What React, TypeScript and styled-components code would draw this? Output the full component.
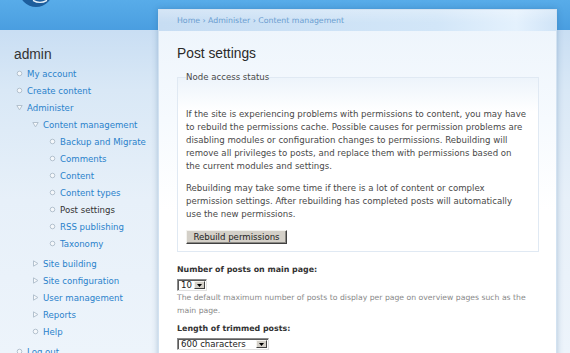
import React from 'react';
import styled, { createGlobalStyle } from 'styled-components';

const Global = createGlobalStyle`
  html, body { margin: 0; padding: 0; overflow: hidden; }
  body { font-family: "DejaVu Sans", Verdana, sans-serif; }
`;

const Page = styled.div`
  width: 570px;
  height: 353px;
  overflow: hidden;
  display: flex;
  align-items: flex-start;
  background: linear-gradient(
    to bottom,
    #58ace9 0px,
    #4a9ee0 30px,
    #c9def3 30px,
    #d9e8f6 90px,
    #e7f0f9 200px,
    #edf4fb 353px
  );
`;

const Sidebar = styled.aside`
  width: 158px;
  flex-shrink: 0;
  padding-left: 14px;
  box-sizing: border-box;
`;

const LogoSvg = styled.svg`
  display: block;
  margin-left: 5px;
`;

const BlockTitle = styled.h2`
  margin: 39px 0 0;
  font: normal 13.8px/18px "Liberation Sans", Arial, sans-serif;
  color: #333;
`;

const MenuList = styled.ul<{ $indent: number; $nested?: boolean }>`
  list-style: none;
  margin: ${p => (p.$nested ? '0' : '2px 0 0')};
  padding: 0 0 ${p => (p.$nested ? '3px' : '0')} ${p => p.$indent}px;
`;

const MenuItem = styled.li`
  margin: 0;
  padding: 0;
`;

const Row = styled.div`
  display: flex;
  align-items: flex-start;
  height: 17px;
  font-size: 8.6px;
  line-height: 17px;
  white-space: nowrap;
`;

const BulletSvg = styled.svg`
  flex-shrink: 0;
  margin: 4px 4px 0 0;
`;

const MenuLink = styled.a<{ $active?: boolean }>`
  color: ${p => (p.$active ? '#333' : '#2a82cb')};
  text-decoration: none;
`;

const Panel = styled.main`
  width: 399px;
  flex-shrink: 0;
  margin-top: 9px;
  height: 360px;
  box-sizing: border-box;
  border: 1px solid #d2e2f1;
  border-bottom: none;
  box-shadow: 0 0 6px rgba(30, 80, 130, 0.3);
  background: linear-gradient(to bottom, #eef5fc 20px, #f6fafe 110px, #ffffff 200px);
  display: flex;
  flex-direction: column;
`;

const Breadcrumb = styled.nav`
  height: 21px;
  flex-shrink: 0;
  padding-left: 18px;
  font-size: 7.8px;
  line-height: 21px;
  color: #6a9dd0;
  background:
    linear-gradient(to bottom, rgba(255, 255, 255, 0.25), rgba(255, 255, 255, 0) 60%),
    linear-gradient(to right, #c7ddf3 0%, #d2e6f8 70%, #e4f1fd 90%, #d0e4f7 100%);
`;

const Crumb = styled.a`
  color: #6a9dd0;
  text-decoration: none;
`;

const Content = styled.div`
  padding: 0 17px 0 18px;
  display: flex;
  flex-direction: column;
`;

const Title = styled.h2`
  margin: 14px 0 0;
  font: normal 13.8px/18px "Liberation Sans", Arial, sans-serif;
  color: #2a2a2a;
`;

const Fieldset = styled.fieldset`
  margin: 7px 0 0;
  padding: 24px 10px 7px 8px;
  border: 1px solid #e0e9f3;
  background: linear-gradient(to bottom, #edf4fb 0px, #ffffff 34px);
  min-width: 0;
`;

const Legend = styled.legend`
  padding: 0;
  font-size: 8.6px;
  line-height: 14px;
  color: #494949;
`;

const Para = styled.p`
  margin: 0 0 9px;
  font-size: 8.6px;
  line-height: 13px;
  color: #494949;
`;

const Button = styled.button`
  display: block;
  margin-top: 2px;
  width: 101px;
  height: 14px;
  padding: 0;
  font: 8.6px/12px "DejaVu Sans", Verdana, sans-serif;
  color: #222;
  background: #d4d0c8;
  border: 1px solid;
  border-color: #f4f3ef #404040 #404040 #f4f3ef;
  box-shadow: inset -1px -1px #8c8a85;
`;

const FormItem = styled.div`
  margin-top: 11px;
  display: flex;
  flex-direction: column;
  align-items: flex-start;
  & + & {
    margin-top: 5px;
  }
`;

const Label = styled.label`
  font-size: 7.9px;
  font-weight: bold;
  line-height: 14px;
  color: #333;
`;

const SelectBox = styled.div<{ $w: number }>`
  margin-top: 2px;
  width: ${p => p.$w}px;
  height: 12px;
  box-sizing: border-box;
  display: flex;
  align-items: stretch;
  background: #fff;
  border: 1px solid;
  border-color: #8a8a8a #e0e0e0 #e0e0e0 #8a8a8a;
  box-shadow: inset 1px 1px #5a5a5a;
`;

const SelectValue = styled.span`
  flex: 1;
  padding-left: 3px;
  font-size: 8.6px;
  line-height: 10px;
  color: #222;
`;

const SelectArrow = styled.span`
  width: 11px;
  margin: 1px 1px 1px 0;
  box-sizing: border-box;
  background: #d4d0c8;
  border: 1px solid;
  border-color: #f4f3ef #404040 #404040 #f4f3ef;
  display: flex;
  align-items: center;
  justify-content: center;
`;

const Description = styled.div`
  font-size: 7.7px;
  line-height: 13px;
  color: #898989;
`;

type Kind = 'leaf' | 'collapsed' | 'expanded';
type Item = { label: string; kind: Kind; active?: boolean; children?: Item[] };

const menu: Item[] = [
  { label: 'My account', kind: 'leaf' },
  { label: 'Create content', kind: 'leaf' },
  {
    label: 'Administer',
    kind: 'expanded',
    children: [
      {
        label: 'Content management',
        kind: 'expanded',
        children: [
          { label: 'Backup and Migrate', kind: 'leaf' },
          { label: 'Comments', kind: 'leaf' },
          { label: 'Content', kind: 'leaf' },
          { label: 'Content types', kind: 'leaf' },
          { label: 'Post settings', kind: 'leaf', active: true },
          { label: 'RSS publishing', kind: 'leaf' },
          { label: 'Taxonomy', kind: 'leaf' },
        ],
      },
      { label: 'Site building', kind: 'collapsed' },
      { label: 'Site configuration', kind: 'collapsed' },
      { label: 'User management', kind: 'collapsed' },
      { label: 'Reports', kind: 'collapsed' },
      { label: 'Help', kind: 'leaf' },
    ],
  },
  { label: 'Log out', kind: 'leaf' },
];

const Bullet = ({ kind }: { kind: Kind }) => (
  <BulletSvg width={7} height={7} viewBox="0 0 7 7">
    {kind === 'leaf' && (
      <circle cx="3.5" cy="3.5" r="2.3" fill="#f5f8fb" stroke="#b3c1ce" strokeWidth="1" />
    )}
    {kind === 'collapsed' && (
      <path d="M1.5 0.8 L5.9 3.5 L1.5 6.2 Z" fill="#f5f8fb" stroke="#b3c1ce" strokeWidth="1" />
    )}
    {kind === 'expanded' && (
      <path d="M0.8 1.5 L6.2 1.5 L3.5 5.9 Z" fill="#f5f8fb" stroke="#b3c1ce" strokeWidth="1" />
    )}
  </BulletSvg>
);

const Menu = ({ items, depth }: { items: Item[]; depth: number }) => (
  <MenuList $indent={depth === 0 ? 2 : depth === 1 ? 16 : 17} $nested={depth > 0}>
    {items.map(item => (
      <MenuItem key={item.label}>
        <Row>
          <Bullet kind={item.kind} />
          <MenuLink href="#" $active={item.active}>
            {item.label}
          </MenuLink>
        </Row>
        {item.children && <Menu items={item.children} depth={depth + 1} />}
      </MenuItem>
    ))}
  </MenuList>
);

const Arrow = () => (
  <svg width="5" height="3" viewBox="0 0 5 3">
    <path d="M0 0 L5 0 L2.5 3 Z" fill="#000" />
  </svg>
);

const Select = ({ value, width }: { value: string; width: number }) => (
  <SelectBox $w={width}>
    <SelectValue>{value}</SelectValue>
    <SelectArrow>
      <Arrow />
    </SelectArrow>
  </SelectBox>
);

export default function App() {
  return (
    <>
      <Global />
      <Page>
        <Sidebar>
          <LogoSvg width="34" height="7" viewBox="0 0 34 7">
            <circle cx="17" cy="-10" r="17" fill="#1d5e9d" />
            <path d="M14 0.3 Q21 4.5 28 0.3" fill="none" stroke="#eaf3fb" strokeWidth="1.4" />
          </LogoSvg>
          <BlockTitle>admin</BlockTitle>
          <Menu items={menu} depth={0} />
        </Sidebar>
        <Panel>
          <Breadcrumb>
            <Crumb href="#">Home</Crumb> › <Crumb href="#">Administer</Crumb> ›{' '}
            <Crumb href="#">Content management</Crumb>
          </Breadcrumb>
          <Content>
            <Title>Post settings</Title>
            <Fieldset>
              <Legend>Node access status</Legend>
              <Para>
                If the site is experiencing problems with permissions to content, you may have to
                rebuild the permissions cache. Possible causes for permission problems are disabling
                modules or configuration changes to permissions. Rebuilding will remove all
                privileges to posts, and replace them with permissions based on the current modules
                and settings.
              </Para>
              <Para>
                Rebuilding may take some time if there is a lot of content or complex permission
                settings. After rebuilding has completed posts will automatically use the new
                permissions.
              </Para>
              <Button type="button">Rebuild permissions</Button>
            </Fieldset>
            <FormItem>
              <Label>Number of posts on main page:</Label>
              <Select value="10" width={30} />
              <Description>
                The default maximum number of posts to display per page on overview pages such as
                the main page.
              </Description>
            </FormItem>
            <FormItem>
              <Label>Length of trimmed posts:</Label>
              <Select value="600 characters" width={92} />
              <Description>
                The maximum number of characters used in the trimmed version of a post. Drupal will
                use this setting to determine at which offset long posts should be trimmed.
              </Description>
            </FormItem>
          </Content>
        </Panel>
      </Page>
    </>
  );
}
